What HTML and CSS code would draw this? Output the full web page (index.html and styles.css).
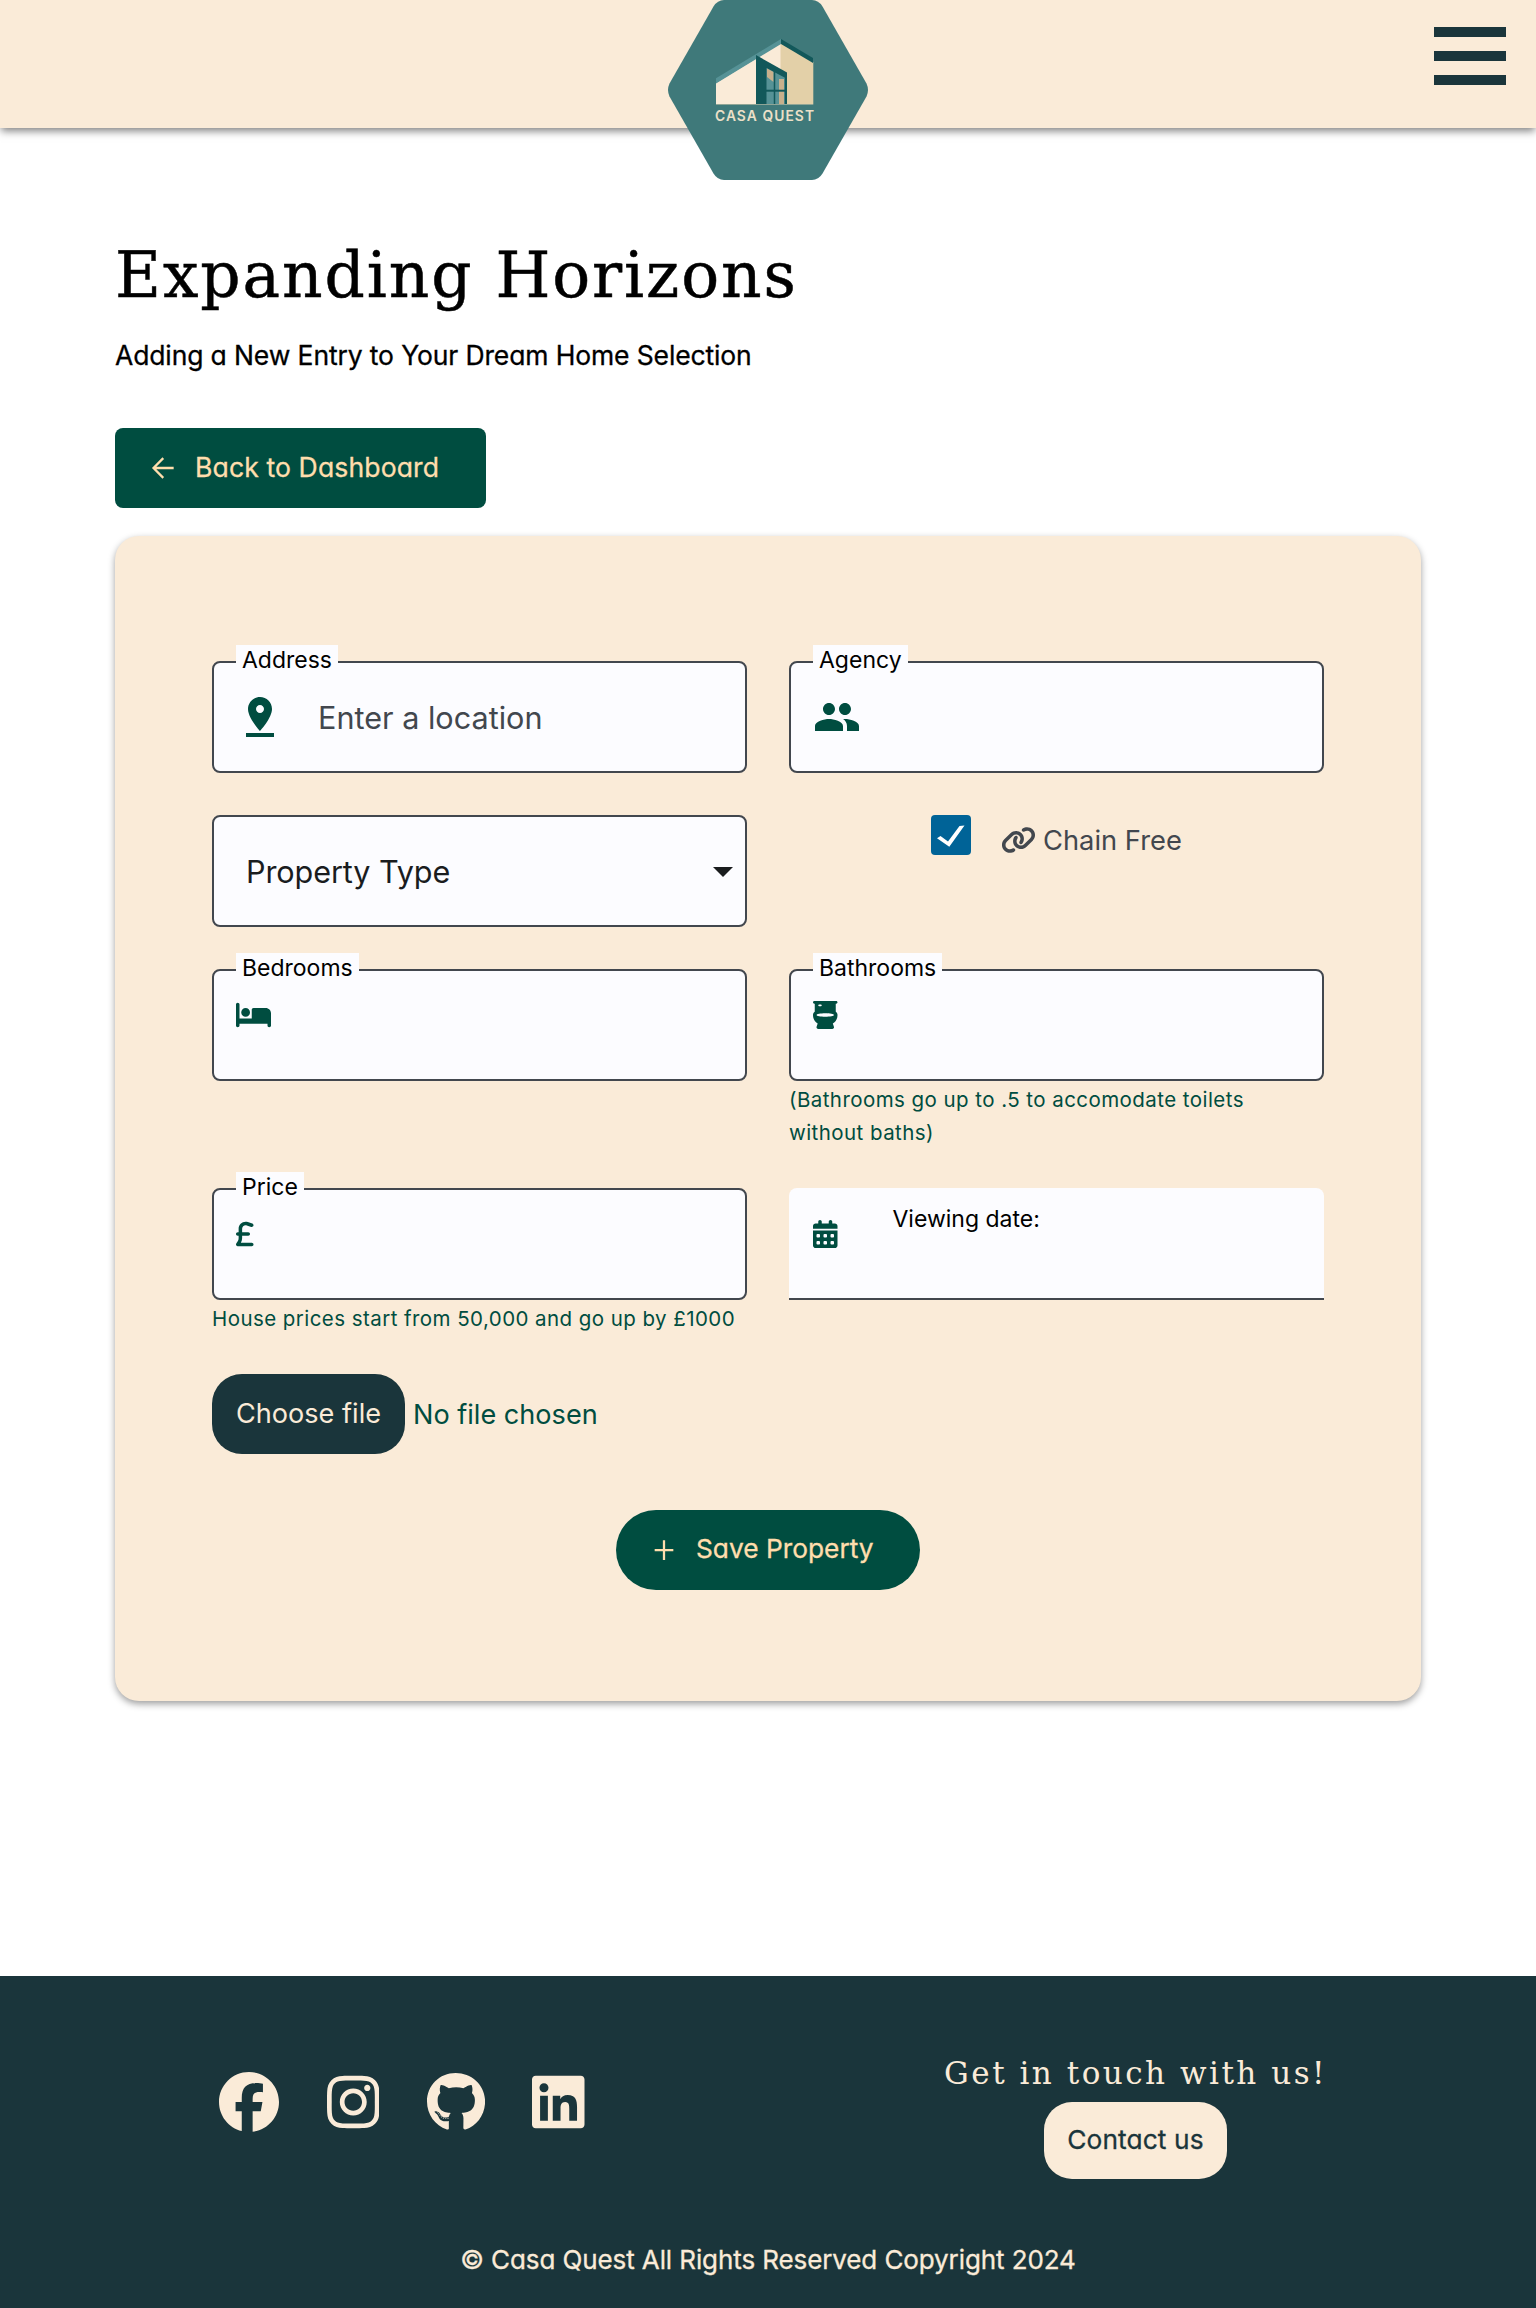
FILE: index.html
```html
<!DOCTYPE html>
<html lang="en">
<head>
<meta charset="utf-8">
<title>Casa Quest - Add Property</title>
<link rel="stylesheet" href="styles.css">
</head>
<body>
<header class="header">
  <a class="logo" href="#">
    <svg width="200" height="180" viewBox="0 0 200 180">
      <path fill="#3f797a" d="M56 0H144Q150.500 0 154.500 6.500L198.500 83.500Q201.500 90 198.500 96.500L154.500 173.500Q150.500 180 144 180H56Q49.500 180 45.500 173.500L1.500 96.500Q-1.500 90 1.500 83.500L45.500 6.500Q49.500 0 56 0Z"/>
      <path fill="#faebd8" d="M48 83 113 43V104H48Z"/>
      <path fill="#e3d0a8" d="M112.500 43 145.300 62V104H112.500Z"/>
      <path fill="#569296" d="M48 78.300 113 39V44L48 83.500Z"/>
      <path fill="#12585a" d="M113 39 145 58V63L113 44Z"/>
      <path fill="#12585a" d="M88 55 119 72.500V104H88Z"/>
      <path fill="#569296" d="M98.500 68 117.500 78V104H98.500Z"/>
      <path fill="#c8b08c" d="M99 68.500 105.500 72V82L99 77ZM111 79H116V104H111Z"/>
      <path stroke="#12585a" stroke-width="1.500" d="M106.500 71V104M117.500 77V104"/>
      <path stroke="#12585a" stroke-width="2" d="M98 90.700H118"/>
      <path stroke="#8fa596" d="M48 104.500H145.300"/>
      <text class="logo-text" x="47" y="120.500" textLength="99">CASA QUEST</text>
    </svg>
  </a>
  <button class="menu" aria-label="Menu"><span></span><span></span><span></span></button>
</header>

<main class="main">
  <h1 class="title">Expanding Horizons</h1>
  <p class="subtitle">Adding a New Entry to Your Dream Home Selection</p>
  <a class="btn btn-back" href="#">
    <svg class="line-icon" width="32" height="32" viewBox="0 0 24 24"><path d="M20 12H5.500M12.200 4.600 4.900 12 12.200 19.400"/></svg>
    <span>Back to Dashboard</span>
  </a>

  <form class="card">
    <div class="grid">
      <div class="field">
        <span class="label">Address</span>
        <svg width="48" height="48" viewBox="0 0 24 24"><path d="M18 8c0-3.310-2.690-6-6-6S6 4.690 6 8c0 4.500 6 11 6 11s6-6.500 6-11zm-8 0c0-1.100.9-2 2-2s2 .9 2 2-.89 2-2 2c-1.100 0-2-.9-2-2zM5 20v2h14v-2H5z"/></svg>
        <span class="placeholder">Enter a location</span>
      </div>
      <div class="field">
        <span class="label">Agency</span>
        <svg width="48" height="48" viewBox="0 0 24 24"><path d="M16 11c1.660 0 2.990-1.340 2.990-3S17.660 5 16 5c-1.660 0-3 1.340-3 3s1.340 3 3 3zm-8 0c1.660 0 2.990-1.340 2.990-3S9.660 5 8 5C6.340 5 5 6.340 5 8s1.340 3 3 3zm0 2c-2.330 0-7 1.170-7 3.500V19h14v-2.500c0-2.330-4.670-3.500-7-3.500zm8 0c-.29 0-.62.020-.97.050 1.160.84 1.970 1.970 1.970 3.450V19h6v-2.500c0-2.330-4.670-3.500-7-3.500z"/></svg>
      </div>

      <div class="field field-select">
        <span>Property Type</span>
        <svg class="caret" width="20" height="10" viewBox="0 0 20 10"><path d="M0 0H20L10 10Z"/></svg>
      </div>
      <div class="check-row">
        <span class="checkbox"><svg width="40" height="40" viewBox="0 0 40 40"><path fill="#fff" d="M6 23.200 9.500 21 17 26.500 28.500 11 33.500 10.500 18.300 31.700Z"/></svg></span>
        <span class="check-label">
          <svg width="35" height="28" viewBox="0 0 640 512"><path d="M579.8 267.7c56.5-56.5 56.5-148 0-204.5c-50-50-128.8-56.5-186.3-15.4l-1.6 1.1c-14.4 10.3-17.7 30.3-7.4 44.6s30.3 17.7 44.6 7.4l1.6-1.1c32.1-22.9 76-19.3 103.8 8.600c31.5 31.5 31.5 82.5 0 114L422.3 334.8c-31.5 31.5-82.5 31.5-114 0c-27.9-27.9-31.5-71.800-8.600-103.8l1.1-1.6c10.3-14.4 6.9-34.4-7.4-44.6s-34.4-6.900-44.6 7.400l-1.100 1.600C206.5 251.2 213 330 263 380c56.5 56.5 148 56.5 204.5 0L579.8 267.7zM60.2 244.3c-56.5 56.5-56.5 148 0 204.5c50 50 128.8 56.5 186.3 15.4l1.6-1.1c14.4-10.3 17.7-30.3 7.4-44.6s-30.3-17.7-44.6-7.4l-1.6 1.1c-32.1 22.9-76 19.3-103.8-8.600C74 372 74 321 105.5 289.5L217.7 177.2c31.5-31.5 82.5-31.5 114 0c27.9 27.9 31.5 71.8 8.600 103.9l-1.100 1.600c-10.3 14.4-6.9 34.4 7.400 44.600s34.400 6.900 44.600-7.400l1.100-1.600C433.5 260.8 427 182 377 132c-56.5-56.5-148-56.5-204.5 0L60.2 244.3z"/></svg>
          <span>Chain Free</span>
        </span>
      </div>

      <div class="field field-top">
        <span class="label">Bedrooms</span>
        <svg width="35" height="28" viewBox="0 0 640 512"><path d="M32 32c17.7 0 32 14.3 32 32V320H288V160c0-17.7 14.3-32 32-32H544c53 0 96 43 96 96V448c0 17.7-14.3 32-32 32s-32-14.3-32-32V416H64v32c0 17.7-14.3 32-32 32s-32-14.3-32-32V64C0 46.3 14.3 32 32 32zm144 96a80 80 0 1 1 0 160 80 80 0 1 1 0-160z"/></svg>
      </div>
      <div>
        <div class="field field-top">
          <span class="label">Bathrooms</span>
          <svg width="24.500" height="28" viewBox="0 0 448 512"><path fill-rule="evenodd" d="M24 0C10.7 0 0 10.7 0 24S10.7 48 24 48h8V196.9c-1.900 1.400-3.800 2.900-5.600 4.400C10.9 214.5 0 232.9 0 256c0 46.9 14.3 84.1 37 112.5c14.2 17.7 31.1 31.3 48.5 41.8L65.600 469.9c-3.300 9.800-1.600 20.5 4.400 28.8s15.7 13.3 26 13.3H352c10.3 0 19.9-4.900 26-13.300s7.700-19.100 4.400-28.800l-19.800-59.500c17.4-10.5 34.3-24.1 48.5-41.8c22.7-28.4 37-65.5 37-112.5c0-23.1-10.9-41.5-26.4-54.6c-1.800-1.500-3.700-3-5.600-4.400V48h8c13.3 0 24-10.7 24-24s-10.7-24-24-24H24zM384 256c0 18-72 32-160 32S64 274 64 256s72-32 160-32 160 14 160 32zM112 64h32c8.800 0 16 7.200 16 16s-7.200 16-16 16H112c-8.800 0-16-7.200-16-16s7.200-16 16-16z"/></svg>
        </div>
        <p class="hint">(Bathrooms go up to .5 to accomodate toilets<br>without baths)</p>
      </div>

      <div>
        <div class="field field-top">
          <span class="label">Price</span>
          <svg width="17.500" height="28" viewBox="0 0 320 512"><path d="M112 160.4c0-35.5 28.8-64.4 64.4-64.4c6.900 0 13.8 1.100 20.4 3.300l81.2 27.1c16.8 5.600 34.9-3.500 40.5-20.2s-3.500-34.9-20.2-40.5L217 38.6c-13.1-4.400-26.800-6.600-40.600-6.600C105.5 32 48 89.5 48 160.4V224H32c-17.7 0-32 14.3-32 32s14.3 32 32 32H48v44.5c0 17.4-4.700 34.5-13.700 49.4L4.600 431.5c-5.900 9.900-6.100 22.2-.4 32.2S20.5 480 32 480H288c17.7 0 32-14.3 32-32s-14.3-32-32-32H88.5l.7-1.100C104.1 390 112 361.5 112 332.5V288H224c17.7 0 32-14.3 32-32s-14.3-32-32-32H112V160.400z"/></svg>
        </div>
        <p class="hint">House prices start from 50,000 and go up by £1000</p>
      </div>
      <div class="field field-top field-date">
        <svg width="24.500" height="28" viewBox="0 0 448 512"><path fill-rule="evenodd" d="M128 0c17.7 0 32 14.3 32 32V64H288V32c0-17.7 14.3-32 32-32s32 14.3 32 32V64h48c26.5 0 48 21.5 48 48v48H0V112C0 85.5 21.5 64 48 64H96V32c0-17.7 14.3-32 32-32zM0 192H448V464c0 26.5-21.5 48-48 48H48c-26.5 0-48-21.5-48-48V192zm64 80v32c0 8.800 7.200 16 16 16h32c8.800 0 16-7.200 16-16V272c0-8.800-7.200-16-16-16H80c-8.800 0-16 7.200-16 16zm128 0v32c0 8.800 7.200 16 16 16h32c8.800 0 16-7.200 16-16V272c0-8.800-7.200-16-16-16H208c-8.800 0-16 7.200-16 16zm144-16c-8.800 0-16 7.200-16 16v32c0 8.800 7.200 16 16 16h32c8.800 0 16-7.200 16-16V272c0-8.800-7.200-16-16-16H336zM64 400v32c0 8.800 7.200 16 16 16h32c8.800 0 16-7.200 16-16V400c0-8.800-7.200-16-16-16H80c-8.800 0-16 7.200-16 16zm144-16c-8.800 0-16 7.200-16 16v32c0 8.800 7.200 16 16 16h32c8.800 0 16-7.200 16-16V400c0-8.800-7.200-16-16-16H208zm112 16v32c0 8.800 7.200 16 16 16h32c8.800 0 16-7.200 16-16V400c0-8.800-7.200-16-16-16H336c-8.800 0-16 7.200-16 16z"/></svg>
        <span class="date-label">Viewing date:</span>
      </div>
    </div>

    <div class="file">
      <span class="file-btn">Choose file</span>
      <span class="file-name">No file chosen</span>
    </div>

    <button class="btn btn-save" type="button">
      <svg class="line-icon" width="32" height="32" viewBox="0 0 24 24"><path d="M12 4.700V19.500M5 12.100H19"/></svg>
      <span>Save Property</span>
    </button>
  </form>
</main>

<footer class="footer">
  <div class="footer-row">
    <div class="socials">
      <svg width="60" height="60" viewBox="0 0 512 512"><path d="M512 256C512 114.6 397.4 0 256 0S0 114.6 0 256C0 376 82.7 476.8 194.2 504.5V334.2H141.4V256h52.8V222.3c0-87.1 39.4-127.5 125-127.5c16.2 0 44.2 3.200 55.7 6.400V172c-6-.6-16.500-1-29.600-1c-42 0-58.2 15.9-58.2 57.2V256h83.6l-14.4 78.2H287V510.1C413.8 494.8 512 386.9 512 256z"/></svg>
      <svg width="52.500" height="60" viewBox="0 0 448 512"><path d="M224.1 141c-63.6 0-114.9 51.3-114.9 114.9s51.3 114.9 114.9 114.9S339 319.5 339 255.9 287.7 141 224.1 141zm0 189.6c-41.1 0-74.7-33.5-74.7-74.7s33.5-74.7 74.7-74.7 74.7 33.5 74.7 74.7-33.6 74.7-74.7 74.7zm146.4-194.3c0 14.9-12 26.8-26.8 26.8-14.9 0-26.8-12-26.8-26.8s12-26.8 26.8-26.8 26.8 12 26.8 26.8zm76.1 27.2c-1.700-35.9-9.900-67.7-36.2-93.9-26.2-26.2-58-34.4-93.9-36.2-37-2.100-147.9-2.100-184.9 0-35.8 1.700-67.6 9.900-93.9 36.1s-34.4 58-36.2 93.9c-2.100 37-2.100 147.9 0 184.9 1.700 35.9 9.900 67.7 36.2 93.9s58 34.4 93.9 36.2c37 2.100 147.9 2.100 184.9 0 35.9-1.700 67.7-9.900 93.9-36.2 26.2-26.2 34.4-58 36.2-93.9 2.100-37 2.100-147.8 0-184.8zM398.8 388c-7.800 19.6-22.9 34.7-42.6 42.6-29.5 11.7-99.5 9-132.1 9s-102.7 2.600-132.1-9c-19.6-7.800-34.7-22.9-42.6-42.6-11.7-29.5-9-99.5-9-132.1s-2.600-102.7 9-132.1c7.800-19.6 22.9-34.7 42.6-42.6 29.5-11.7 99.5-9 132.1-9s102.7-2.600 132.1 9c19.6 7.800 34.7 22.9 42.6 42.6 11.7 29.5 9 99.5 9 132.1s2.700 102.7-9 132.1z"/></svg>
      <svg width="58.100" height="60" viewBox="0 0 496 512"><path d="M165.9 397.4c0 2-2.300 3.600-5.200 3.600-3.300.3-5.600-1.300-5.600-3.600 0-2 2.300-3.600 5.200-3.600 3-.3 5.600 1.300 5.600 3.600zm-31.1-4.500c-.7 2 1.300 4.300 4.300 4.900 2.600 1 5.600 0 6.200-2s-1.300-4.300-4.300-5.200c-2.600-.7-5.500.3-6.200 2.300zm44.2-1.700c-2.900.7-4.900 2.600-4.600 4.900.3 2 2.900 3.300 5.900 2.600 2.900-.7 4.900-2.600 4.600-4.600-.3-1.900-3-3.200-5.900-2.900zM244.8 8C106.1 8 0 113.3 0 252c0 110.9 69.8 205.8 169.5 239.2 12.8 2.300 17.3-5.600 17.3-12.1 0-6.200-.3-40.4-.3-61.4 0 0-70 15-84.7-29.8 0 0-11.4-29.1-27.8-36.6 0 0-22.9-15.7 1.600-15.4 0 0 24.9 2 38.6 25.8 21.9 38.6 58.6 27.5 72.9 20.9 2.300-16 8.800-27.1 16-33.7-55.9-6.200-112.3-14.3-112.3-110.5 0-27.5 7.600-41.3 23.6-58.9-2.600-6.500-11.1-33.3 2.600-67.9 20.9-6.500 69 27 69 27 20-5.600 41.5-8.500 62.8-8.500s42.8 2.900 62.8 8.500c0 0 48.1-33.6 69-27 13.7 34.7 5.200 61.4 2.600 67.9 16 17.7 25.8 31.5 25.8 58.9 0 96.5-58.9 104.2-114.8 110.5 9.200 7.900 17 22.9 17 46.4 0 33.7-.3 75.4-.3 83.6 0 6.500 4.600 14.4 17.3 12.1C428.2 457.8 496 362.9 496 252 496 113.3 383.5 8 244.8 8zM97.2 352.9c-1.300 1-1 3.300.7 5.200 1.600 1.600 3.900 2.300 5.200 1 1.300-1 1-3.300-.7-5.200-1.600-1.600-3.900-2.300-5.200-1zm-10.8-8.100c-.7 1.300.3 2.900 2.300 3.900 1.600 1 3.600.7 4.300-.7.7-1.300-.3-2.900-2.300-3.900-2-.6-3.600-.3-4.300.7zm32.4 35.6c-1.600 1.300-1 4.300 1.300 6.200 2.300 2.300 5.200 2.600 6.500 1 1.300-1.300.7-4.300-1.300-6.200-2.200-2.300-5.200-2.600-6.500-1zm-11.4-14.7c-1.600 1-1.600 3.600 0 5.900 1.600 2.300 4.300 3.300 5.600 2.300 1.600-1.300 1.600-3.900 0-6.200-1.400-2.300-4-3.300-5.600-2z"/></svg>
      <svg width="52.500" height="60" viewBox="0 0 448 512"><path d="M416 32H31.9C14.3 32 0 46.5 0 64.3v383.4C0 465.5 14.3 480 31.9 480H416c17.6 0 32-14.5 32-32.3V64.3c0-17.8-14.4-32.3-32-32.3zM135.4 416H69V202.2h66.5V416zm-33.2-243c-21.3 0-38.5-17.3-38.5-38.5S80.9 96 102.2 96c21.2 0 38.5 17.3 38.5 38.5 0 21.3-17.2 38.5-38.5 38.5zm282.1 243h-66.4V312c0-24.8-.5-56.7-34.5-56.7-34.6 0-39.9 27-39.9 54.9V416h-66.4V202.2h63.7v29.2h.9c8.900-16.8 30.6-34.5 62.9-34.5 67.2 0 79.7 44.3 79.7 101.900V416z"/></svg>
    </div>
    <div class="contact">
      <h2 class="contact-title">Get in touch with us!</h2>
      <a class="contact-btn" href="#">Contact us</a>
    </div>
  </div>
  <p class="copyright">© Casa Quest All Rights Reserved Copyright 2024</p>
</footer>
</body>
</html>
```
FILE: styles.css
```css
* { box-sizing: border-box; }
body { margin: 0; background: #fff; color: #000; font-family: "Inter", sans-serif; }
h1, h2, p { margin: 0; font-weight: 400; }
a { text-decoration: none; }
button { border: 0; font: inherit; }
svg { display: block; flex: none; fill: currentColor; }
.line-icon { fill: none; stroke: currentColor; stroke-width: 1.700; }

.header {
  position: relative;
  height: 128px;
  display: flex;
  justify-content: flex-end;
  align-items: flex-start;
  padding: 27px 30px 0 0;
  background: #faebd8;
  box-shadow: 0 4px 8px -1px rgba(0, 0, 0, .5);
}
.logo { position: absolute; left: 668px; top: 0; }
.logo-text { font: 600 13.800px "Inter", sans-serif; fill: #ece0c8; }
.menu { display: flex; flex-direction: column; gap: 14px; width: 72px; padding: 0; background: none; }
.menu span { height: 10px; background: #1a353b; }

.main { padding: 108px 115px 0; }
.title {
  font: 400 63px/80px "DejaVu Serif", serif;
  letter-spacing: 1.900px;
  -webkit-text-stroke: .5px currentColor;
}
.subtitle { margin-top: 19px; font-size: 26.500px; line-height: 40px; letter-spacing: -.130px; }
.subtitle, .btn, .contact-btn, .copyright { font-feature-settings: "cv11"; -webkit-text-stroke: .3px currentColor; }

.btn {
  display: flex;
  align-items: center;
  gap: 16px;
  height: 80px;
  padding: 0 32px;
  background: #004d40;
  color: #ffdead;
}
.btn span { margin-bottom: 3px; white-space: nowrap; }
.btn-back { width: 371px; margin-top: 53px; border-radius: 8px; font-size: 26.600px; letter-spacing: .1px; }
.btn-save { width: 304px; margin: 56px auto 0; border-radius: 40px; font-size: 26.300px; }

.card {
  height: 1165px;
  margin-top: 28px;
  padding: 125px 97px 0;
  border-radius: 24px;
  background: #faebd8;
  box-shadow: 0 3px 7px rgba(0, 0, 0, .38);
}
.grid { display: grid; grid-template-columns: 535px 535px; gap: 42px; align-items: start; }
.field {
  position: relative;
  display: flex;
  align-items: center;
  height: 112px;
  padding: 0 22px;
  border: 2px solid #42474e;
  border-radius: 8px;
  background: #fcfcff;
  color: #004d40;
}
.label {
  position: absolute;
  left: 22px;
  top: -18px;
  height: 30px;
  padding: 0 6px;
  background: #fcfcff;
  color: #000;
  font-size: 23px;
  line-height: 30px;
}
.placeholder { margin-left: 34px; color: #42474e; font-size: 30.600px; }
.field-select { justify-content: space-between; padding: 0 12px 0 32px; color: #1a1c1e; font-size: 30.600px; letter-spacing: -.1px; }
.caret { margin-top: 2px; }
.field-top { align-items: flex-start; padding-top: 30px; }
.field-date { border: 0; border-bottom: 2px solid #42474e; border-radius: 8px 8px 0 0; padding: 32px 24px 0; }
.date-label { margin: -16px 0 0 55px; color: #000; font-size: 23px; line-height: 30px; }
.check-row { display: flex; gap: 30px; padding-left: 142px; }
.checkbox { width: 40px; height: 40px; border-radius: 4px; background: #006397; }
.check-label { display: flex; align-items: center; gap: 7px; height: 50px; color: #42474e; font-size: 27.300px; }
.hint { margin-bottom: -3px; padding-top: 2px; color: #004d40; font-size: 20.500px; line-height: 33px; letter-spacing: .44px; white-space: nowrap; }

.file { display: flex; align-items: center; gap: 8px; margin-top: 42px; color: #004d40; font-size: 27.100px; }
.file-btn { width: 193px; border-radius: 30px; background: #1a353b; color: #faebd8; line-height: 80px; text-align: center; }

.footer { height: 332px; margin-top: 275px; padding: 73px 209px 0 219px; background: #1a353b; color: #faebd8; }
.footer-row { display: flex; justify-content: space-between; height: 130px; }
.socials { display: flex; gap: 47.500px; margin-top: 23px; }
.contact { display: flex; flex-direction: column; align-items: center; }
.contact-title { font: 400 31px/48px "DejaVu Serif", serif; letter-spacing: 2.500px; }
.contact-btn {
  width: 183px;
  margin-top: 5px;
  border-radius: 28px;
  background: #faebd8;
  color: #1a353b;
  font-size: 26.300px;
  line-height: 76px;
  height: 77px;
  letter-spacing: .1px;
  text-align: center;
}
.copyright { margin: 61px 0 0 -10px; font-size: 26px; line-height: 40px; letter-spacing: -.1px; text-align: center; }
```
